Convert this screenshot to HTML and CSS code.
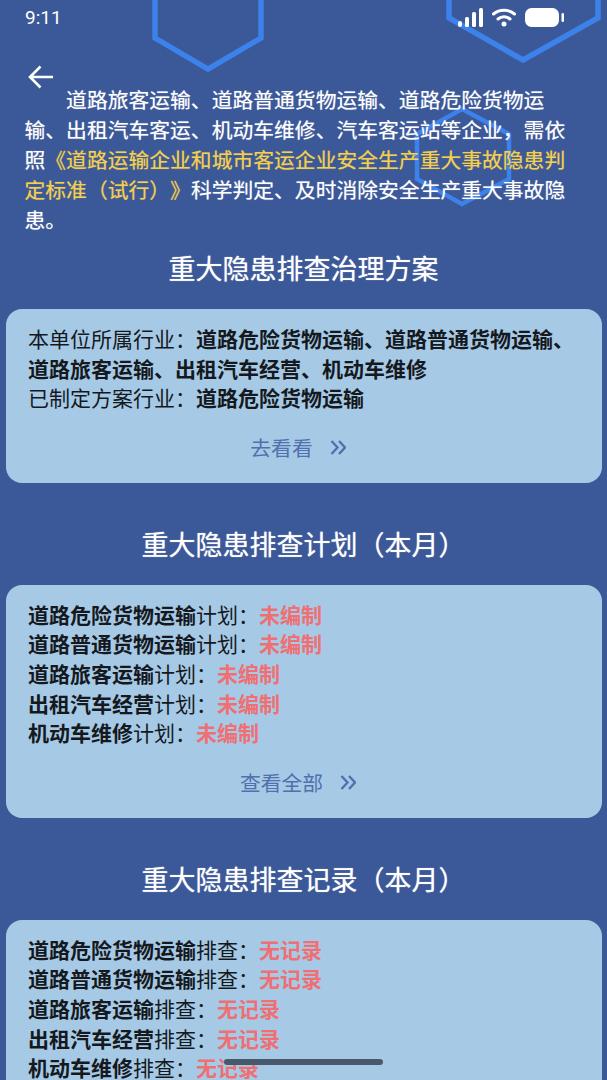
FILE: index.html
```html
<!DOCTYPE html>
<html>
    <head>
      <meta charset="utf-8">
      <title>重大隐患排查治理</title>
      <link rel="stylesheet" href="styles.css">
    </head>

    <body>
      <div class="page">
        <!-- 背景六边形 -->
        <svg class="hex_bg" width="607" height="210" viewBox="0 0 607 210">
          <path class="hex_line" d="M155 -10V38L208 69L261 38V-10"/>
          <path class="hex_line" d="M449 -10V18L523 60L598 18V-10"/>
          <path class="hex_line hex_small" d="M462 109L509 134V179L462 204L417 179V134Z"/>
        </svg>

        <div class="status_bar">
          <span class="status_time">9:11</span>
          <div class="status_icons">
            <svg width="25" height="19" viewBox="0 0 25 19">
              <rect class="icon_fill" x="0" y="13" width="4" height="6" rx="2"/>
              <rect class="icon_fill" x="7" y="9" width="4" height="10" rx="1.500"/>
              <rect class="icon_fill" x="14" y="4" width="4" height="15" rx="1.500"/>
              <rect class="icon_fill" x="21" y="0" width="4" height="19" rx="1.500"/>
            </svg>
            <svg width="24" height="19" viewBox="0 0 24 19">
              <path class="wifi_line" d="M1.500 6C7.500 1 16.500 1 22.500 6"/>
              <path class="wifi_line" d="M6 11C9.500 8 14.500 8 18 11"/>
              <circle class="icon_fill" cx="12" cy="16" r="2.500"/>
            </svg>
            <svg width="40" height="19" viewBox="0 0 40 19">
              <rect class="icon_fill" x="0" y="0" width="34" height="19" rx="6.500"/>
              <rect class="icon_fill" x="36.500" y="5" width="2.500" height="9" rx="1.200"/>
            </svg>
          </div>
        </div>

        <div class="nav_bar">
          <svg width="26" height="26" viewBox="0 0 26 26">
            <path class="back_arrow" d="M25 13H2M12.500 2.500L2 13L12.500 23.500"/>
          </svg>
        </div>

        <p class="intro">道路旅客运输、道路普通货物运输、道路危险货物运输、出租汽车客运、机动车维修、汽车客运站等企业，需依照<span class="intro_std">《道路运输企业和城市客运企业安全生产重大事故隐患判定标准（试行）》</span>科学判定、及时消除安全生产重大事故隐患。</p>

        <h2 class="sec_title">重大隐患排查治理方案</h2>
        <div class="card">
          <p class="card_line">本单位所属行业：<b>道路危险货物运输、道路普通货物运输、道路旅客运输、出租汽车经营、机动车维修</b></p>
          <p class="card_line">已制定方案行业：<b>道路危险货物运输</b></p>
          <div class="card_more">去看看
            <svg class="more_icon" width="16" height="15" viewBox="0 0 16 15"><path d="M1.500 1L7.500 7.500L1.500 14M9 1L15 7.500L9 14"/></svg>
          </div>
        </div>

        <h2 class="sec_title">重大隐患排查计划（本月）</h2>
        <div class="card">
          <p class="card_line"><b>道路危险货物运输</b>计划：<b class="warn">未编制</b></p>
          <p class="card_line"><b>道路普通货物运输</b>计划：<b class="warn">未编制</b></p>
          <p class="card_line"><b>道路旅客运输</b>计划：<b class="warn">未编制</b></p>
          <p class="card_line"><b>出租汽车经营</b>计划：<b class="warn">未编制</b></p>
          <p class="card_line"><b>机动车维修</b>计划：<b class="warn">未编制</b></p>
          <div class="card_more">查看全部
            <svg class="more_icon" width="16" height="15" viewBox="0 0 16 15"><path d="M1.500 1L7.500 7.500L1.500 14M9 1L15 7.500L9 14"/></svg>
          </div>
        </div>

        <h2 class="sec_title">重大隐患排查记录（本月）</h2>
        <div class="card">
          <p class="card_line"><b>道路危险货物运输</b>排查：<b class="warn">无记录</b></p>
          <p class="card_line"><b>道路普通货物运输</b>排查：<b class="warn">无记录</b></p>
          <p class="card_line"><b>道路旅客运输</b>排查：<b class="warn">无记录</b></p>
          <p class="card_line"><b>出租汽车经营</b>排查：<b class="warn">无记录</b></p>
          <p class="card_line"><b>机动车维修</b>排查：<b class="warn">无记录</b></p>
        </div>

        <div class="home_bar"></div>
      </div>
    </body>
</html>
```

FILE: styles.css
```css
html, body{
    margin: 0;
    padding: 0;
}
body{
    font-family: "Liberation Sans", "Noto Sans CJK SC", sans-serif;
    color: #fff;
    text-spacing-trim: space-all;
}
.page{
    position: relative;
    width: 607px;
    height: 1080px;
    overflow: hidden;
    background-color: #3b5998;
}
.hex_bg{
    position: absolute;
    top: 0;
    left: 0;
}
.hex_line{
    fill: none;
    stroke: #3c82ea;
    stroke-width: 5.500;
}
.hex_small{
    stroke-width: 4.500;
}
.status_bar{
    position: relative;
    display: flex;
    justify-content: space-between;
    align-items: center;
    height: 34px;
    padding: 0 42px 0 25px;
}
.status_time{
    font-size: 19px;
    font-family: "Roboto", sans-serif;
}
.status_icons{
    display: flex;
    align-items: center;
    gap: 9px;
}
.icon_fill{
    fill: #fff;
}
.wifi_line{
    fill: none;
    stroke: #fff;
    stroke-width: 3;
    stroke-linecap: round;
}
.nav_bar{
    position: relative;
    display: flex;
    height: 52px;
    padding-left: 28px;
    padding-top: 30px;
    box-sizing: border-box;
}
.back_arrow{
    fill: none;
    stroke: #fff;
    stroke-width: 2.600;
}
.intro{
    position: relative;
    margin: 0 25px 0 24.500px;
    font-size: 20.800px;
    line-height: 30px;
    text-indent: 41.600px;
    text-shadow: 0 0 1px rgba(255,255,255,.55);
}
.intro_std{
    color: #f5cf4f;
    text-shadow: 0 0 1px rgba(245,207,79,.55);
}
.sec_title{
    position: relative;
    margin: 16px 0 21px;
    font-size: 27px;
    line-height: 36px;
    font-weight: 400;
    text-align: center;
    text-shadow: 0 0 1px rgba(255,255,255,.7);
}
.card{
    position: relative;
    margin: 0 5px 45px 6px;
    padding: 16px 22px 19px;
    border-radius: 16px;
    background-color: #a6cae6;
    color: #15191e;
}
.card_line{
    margin: 0;
    font-size: 21px;
    line-height: 29.600px;
}
.card_line b{
    font-weight: 700;
}
.card_line .warn{
    color: #ef6f73;
}
.card_more{
    display: flex;
    justify-content: center;
    align-items: center;
    gap: 17px;
    margin-top: 20px;
    padding-right: 12px;
    font-size: 20.800px;
    line-height: 30px;
    color: #4f71ad;
}
.more_icon{
    fill: none;
    stroke: #4f71ad;
    stroke-width: 2.400;
    margin-top: -3px;
}
.home_bar{
    position: absolute;
    left: 224px;
    top: 1059px;
    width: 159px;
    height: 6px;
    border-radius: 3px;
    background-color: #47596a;
}
```
